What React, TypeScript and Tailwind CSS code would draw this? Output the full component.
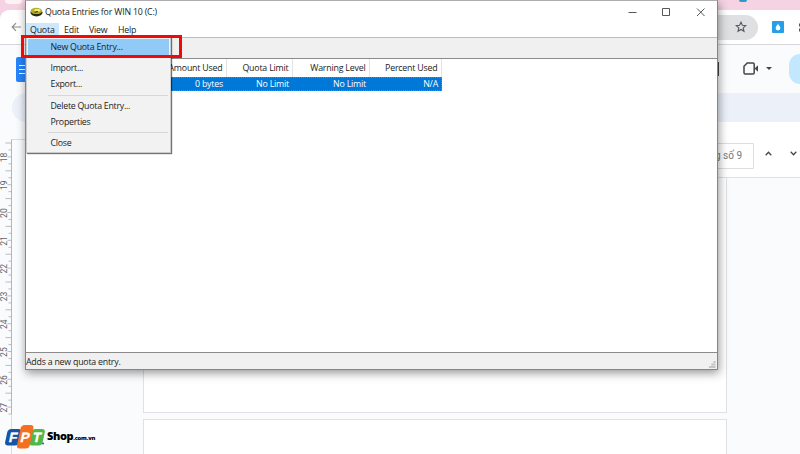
import clsx from 'clsx';

const majorTicks = [18, 19, 20, 21, 22, 23, 24, 25, 26, 27];

const columns = [
  { label: 'Amount Used', value: '0 bytes', className: 'w-[201px]' },
  { label: 'Quota Limit', value: 'No Limit', className: 'w-[66px]' },
  { label: 'Warning Level', value: 'No Limit', className: 'w-[77px]' },
  { label: 'Percent Used', value: 'N/A', className: 'w-[72px]' },
];

const quotaMenu = [
  ['New Quota Entry...'],
  ['Import...', 'Export...'],
  ['Delete Quota Entry...', 'Properties'],
  ['Close'],
];

function VerticalRuler() {
  return (
    <svg
      className="absolute left-0 top-[139px]"
      width="25"
      height="315"
      viewBox="0 0 25 315"
    >
      <path d="M11.5 315V.5H25" fill="none" stroke="#dadce0" />
      <path d="M11.5 275V.5" stroke="#b4b7ba" />
      {majorTicks.map((n, i) => {
        const y = 4 + i * 27.8;
        return (
          <g key={n}>
            <path
              d={`M5.5 ${y}h6M8.5 ${y + 6.95}h3M7.5 ${y + 13.9}h4M8.5 ${y + 20.85}h3`}
              stroke="#a9acaf"
              strokeWidth="0.8"
            />
            <text
              transform={`translate(6.5 ${y + 14.5}) rotate(-90)`}
              textAnchor="middle"
              fill="#5f6368"
              fontSize="8.5"
              fontFamily="Roboto, sans-serif"
            >
              {n}
            </text>
          </g>
        );
      })}
    </svg>
  );
}

function FptLogo() {
  return (
    <div className="absolute left-[5px] top-[424px] flex h-[25px] items-center font-['Open_Sans',sans-serif]">
      <svg width="40" height="25" viewBox="0 0 40 25">
        <g transform="skewX(-12)" fontFamily="'Liberation Sans', sans-serif">
          <rect x="4" y="5" width="14" height="16.5" rx="3.5" fill="#1555a4" />
          <rect x="28" y="5" width="13.5" height="16.5" rx="3.5" fill="#50b848" />
          <rect x="16.5" y="1" width="12.8" height="23.5" rx="3.5" fill="#f37021" />
          <g
            fill="#fff"
            stroke="#fff"
            strokeWidth="0.4"
            fontWeight="bold"
            fontSize="13.5"
            textAnchor="middle"
          >
            <text x="11.2" y="18">F</text>
            <text x="23" y="18">P</text>
            <text x="35" y="18">T</text>
          </g>
        </g>
        <circle cx="38" cy="19.5" r="1" fill="#1555a4" />
      </svg>
      <span className="ml-[2px] whitespace-nowrap text-[11px] font-extrabold tracking-[-0.4px] text-black">
        Shop<span className="text-[5.8px] tracking-[-0.2px]">.com.vn</span>
      </span>
    </div>
  );
}

function BrowserBackdrop() {
  return (
    <div className="flex h-full flex-col bg-[#f9fbfd]">
      <div className="flex h-[10px] shrink-0 justify-between bg-[#f5d3e3]">
        <span className="ml-[5px] h-[4px] w-[17px] rounded-b-[4px] bg-[#fbf3f6]" />
        <span className="mr-[53px] h-[2px] w-[8px] rounded-b-full bg-[#2b9cc8]" />
      </div>
      <div className="flex h-[35px] shrink-0 items-center justify-between border-b border-[#d5d7da] bg-[linear-gradient(#f5d3e3,#f5d3e3)] bg-[length:25px_10px] bg-no-repeat">
        <div className="flex h-full grow items-center rounded-tl-[9px] bg-white">
          <svg className="ml-[11px]" width="11" height="10" viewBox="0 0 11 10">
            <path
              d="M10 5H1.5M5 1.2 1.2 5 5 8.8"
              fill="none"
              stroke="#8a8d91"
              strokeWidth="1.2"
            />
          </svg>
        </div>
        <div className="flex h-full items-center bg-white">
          <div className="flex h-[25px] w-[80px] items-center justify-end rounded-r-full bg-[#dfe0e2] pr-[11px]">
            <svg width="12" height="12" viewBox="0 0 12 12">
              <path
                d="m6 1.2 1.4 3.1 3.4.3-2.6 2.3.8 3.4L6 8.5l-3 1.8.8-3.4L1.2 4.6l3.4-.3z"
                fill="none"
                stroke="#55585c"
                strokeWidth="1.1"
              />
            </svg>
          </div>
          <svg className="ml-[14px]" width="12" height="12" viewBox="0 0 12 12">
            <rect width="12" height="12" rx="1" fill="#259fe8" />
            <path
              d="M6 2.2C6 4 8.4 5 8.4 7.1a2.4 2.4 0 0 1-4.8 0C3.6 5 6 4 6 2.2"
              fill="#fff"
            />
          </svg>
          <svg className="ml-[15px]" width="1" height="9" viewBox="0 0 1 9">
            <path d="M0 .5h2v3H0zM0 5.5h2v3H0z" fill="#55585c" />
          </svg>
        </div>
      </div>
      <div className="flex h-[48px] shrink-0 items-center justify-between overflow-hidden">
        <div className="ml-[16px] flex h-[25px] w-[18px] flex-col items-start justify-center gap-[3px] rounded-[2px] bg-[#2684fc] pl-[3px]">
          <span className="h-px w-3 bg-white" />
          <span className="h-px w-3 bg-white" />
          <span className="h-px w-3 bg-white" />
        </div>
        <div className="flex items-center pb-px">
          <span className="mr-[24px] h-[14px] w-[5px] border-y border-r-2 border-[#444746]" />
          <svg width="16" height="13" viewBox="0 0 16 13">
            <path
              d="M4.2 1H10q1.2 0 1.2 1.2v8.6Q11.2 12 10 12H2.2Q1 12 1 10.8V4.2z"
              fill="none"
              stroke="#444746"
              strokeWidth="1.5"
            />
            <path d="M11.5 6.5 15 3.2v6.6z" fill="#444746" />
          </svg>
          <svg className="ml-[7px]" width="6" height="3" viewBox="0 0 6 3">
            <path d="M0 0h6L3 3z" fill="#444746" />
          </svg>
          <div className="ml-[17px] h-[30px] w-[11px] rounded-l-[15px] bg-[#c2e7ff]" />
        </div>
      </div>
      <div className="ml-[12px] h-[29px] shrink-0 rounded-l-full bg-[#ebf0f9]" />
      <div className="ml-[26px] flex h-[56px] shrink-0 items-center justify-end border-b border-[#dfe1e4] bg-white pt-[12px]">
        <div className="flex h-[26px] w-[70px] items-center justify-end rounded-[1px] border border-[#dcdee1] pr-[11px] font-['Roboto',sans-serif] text-[10px] text-[#74777b]">
          g số 9
        </div>
        <svg className="mb-[4px] ml-[11px]" width="7" height="5" viewBox="0 0 7 5">
          <path d="M.7 4.2 3.5 1.3l2.8 2.9" fill="none" stroke="#444746" strokeWidth="1.3" />
        </svg>
        <svg className="mb-[4px] ml-[18px] mr-[3px]" width="7" height="5" viewBox="0 0 7 5">
          <path d="M.7.8 3.5 3.7 6.3.8" fill="none" stroke="#444746" strokeWidth="1.3" />
        </svg>
      </div>
      <div className="ml-[143px] flex w-[584px] grow flex-col gap-[6px]">
        <div className="h-[235px] shrink-0 border border-t-0 border-[#dfe1e4] bg-white" />
        <div className="grow border border-b-0 border-[#dfe1e4] bg-white" />
      </div>
      <VerticalRuler />
    </div>
  );
}

function QuotaMenu() {
  return (
    <div className="absolute left-0 top-[36px] w-[145px] border border-[#cccccc] bg-[#f2f2f2] pt-px tracking-[-0.26px] shadow-[1px_1px_1px_rgba(0,0,0,0.55)]">
      {quotaMenu.map((group, i) => (
        <div
          key={group[0]}
          className={clsx(
            i > 0 &&
              "before:mb-[2px] before:ml-[21px] before:mr-[2px] before:mt-[2px] before:block before:h-px before:bg-[#d7d7d7] before:content-['']"
          )}
        >
          {group.map((item) => (
            <div
              key={item}
              className={clsx(
                'mx-px flex h-[16.3px] items-center pl-[22.5px]',
                item === 'New Quota Entry...' && 'bg-[#91c9f7]'
              )}
            >
              {item}
            </div>
          ))}
        </div>
      ))}
    </div>
  );
}

function QuotaWindow() {
  return (
    <div className="absolute left-[25px] top-0 flex h-[370px] w-[693px] flex-col whitespace-nowrap border border-[#858585] border-t-[#b0abad] bg-white font-['Open_Sans',sans-serif] text-[8.8px] leading-none tracking-[-0.19px] text-[#222] shadow-[1px_3px_9px_rgba(0,0,0,0.42)]">
      <div className="flex h-[22px] shrink-0 items-center">
        <svg className="ml-[4px]" width="13" height="10" viewBox="0 0 13 10">
          <ellipse cx="6.5" cy="5.6" rx="6" ry="3.8" fill="#292906" />
          <ellipse cx="6.3" cy="3.9" rx="5.8" ry="3.2" fill="#b4ad25" />
          <ellipse cx="7.3" cy="3.3" rx="3.2" ry="1.3" fill="#f0ec82" />
          <path d="M4.5 5.2 8 4.6" stroke="#292906" />
        </svg>
        <span className="ml-[2px] pt-px">Quota Entries for WIN 10 (C:)</span>
        <svg className="ml-auto mr-[12px]" width="77" height="9" viewBox="0 0 77 9">
          <path
            d="M.5 4.5h8M34.5.5h7v7h-7zM69 .5l7.500 7.500M76.500 .5l-7.500 7.500"
            fill="none"
            stroke="#444"
            strokeWidth="0.9"
          />
        </svg>
      </div>
      <div className="flex h-[14px] shrink-0 items-center">
        <span className="flex h-full w-[33px] items-center bg-[#cce8ff] pl-[4px] pt-px">Quota</span>
        <span className="w-[25px] pl-[5px] pt-px">Edit</span>
        <span className="w-[29px] pl-[5px] pt-px">View</span>
        <span className="pl-[5px] pt-px">Help</span>
      </div>
      <div className="h-[22px] shrink-0 border-b border-t border-b-[#8b8b8b] border-t-[#bcbcbc] bg-[#f0f0f0]" />
      <div className="grow">
        <div className="flex h-[18px]">
          {columns.map(({ label, className }) => (
            <div
              key={label}
              className={clsx(
                'flex items-center justify-end border-r border-[#e3e3e3] pr-[3.5px]',
                className
              )}
            >
              {label}
            </div>
          ))}
        </div>
        <div className="flex h-[14px] w-[416px] bg-[#0078d7] text-white outline-1 -outline-offset-1 outline-dotted outline-[#5a87ae]">
          {columns.map(({ label, value, className }) => (
            <div
              key={label}
              className={clsx('flex items-center justify-end pr-[4px]', className)}
            >
              {value}
            </div>
          ))}
        </div>
      </div>
      <div className="flex h-[17px] shrink-0 items-center justify-between border-t border-[#8b8b8b] bg-[#f0f0f0]">
        <span className="pt-[2px] tracking-[-0.22px]">Adds a new quota entry.</span>
        <svg className="self-end" width="8" height="8" viewBox="0 0 8 8">
          <path
            d="M4.5 0h2v2h-2zM2.3 2.5h4.2v2H2.3zM0 5h6.5v2H0z"
            fill="#c3c3c3"
          />
        </svg>
      </div>
      <QuotaMenu />
    </div>
  );
}

export default function App() {
  return (
    <div className="relative h-[454px] w-[800px] overflow-hidden">
      <BrowserBackdrop />
      <QuotaWindow />
      <div className="absolute left-[21px] top-[35px] h-[23px] w-[161px] border-[3px] border-[#f00909]" />
      <FptLogo />
    </div>
  );
}
